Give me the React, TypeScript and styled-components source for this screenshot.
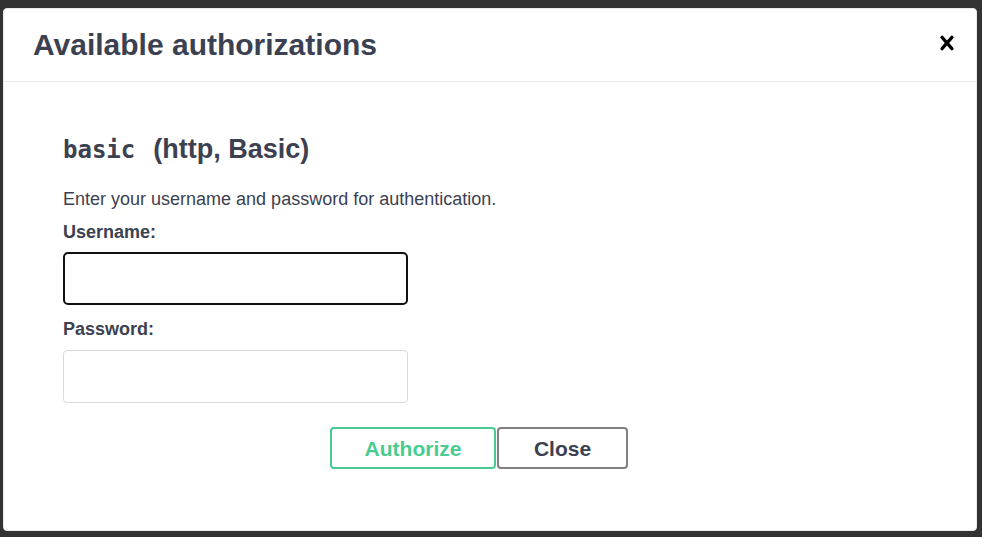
import React from "react";
import styled, { createGlobalStyle } from "styled-components";

const Global = createGlobalStyle`
  html, body { margin: 0; padding: 0; background: #333333; }
  body { font-family: "Liberation Sans", Arial, sans-serif; }
  * { box-sizing: border-box; }
`;

const Backdrop = styled.div`
  width: 982px;
  height: 537px;
  padding: 8px 5px 6px 3px;
  background: #333333;
`;

const Modal = styled.div`
  width: 974px;
  height: 523px;
  background: #ffffff;
  border: 1px solid #ebebeb;
  border-radius: 4px;
  display: flex;
  flex-direction: column;
  overflow: hidden;
`;

const Header = styled.div`
  height: 73px;
  flex: none;
  display: flex;
  align-items: center;
  padding: 0 15px 0 29px;
  border-bottom: 1px solid #ebebeb;
`;

const Title = styled.h3`
  margin: 0;
  font: 700 30px/34px "Liberation Sans", Arial, sans-serif;
  color: #3b4151;
`;

const CloseIcon = styled.button`
  margin-left: auto;
  margin-bottom: 5px;
  width: 28px;
  height: 28px;
  padding: 0;
  border: none;
  background: none;
  display: flex;
  cursor: pointer;
  svg { width: 28px; height: 28px; fill: #000; }
`;

const Content = styled.div`
  padding: 52px 59px 0 59px;
  display: flex;
  flex-direction: column;
  align-items: flex-start;
`;

const SchemeTitle = styled.h4`
  margin: 0;
  font: 700 27px/31px "Liberation Sans", Arial, sans-serif;
  color: #3b4151;
  white-space: pre;
`;

const Code = styled.code`
  font: 700 24px/31px "DejaVu Sans Mono", monospace;
  color: #3b4151;
  margin-right: 3px;
`;

const Description = styled.p`
  margin: 22px 0 0 0;
  font: 400 18px/22px "Liberation Sans", Arial, sans-serif;
  color: #3b4151;
`;

const Label = styled.label<{ $top: number }>`
  display: block;
  margin-top: ${(p) => p.$top}px;
  font: 700 18px/22px "Liberation Sans", Arial, sans-serif;
  color: #3b4151;
`;

const Input = styled.input<{ $focused?: boolean; $top: number }>`
  display: block;
  margin-top: ${(p) => p.$top}px;
  width: 345px;
  height: 53px;
  border-radius: ${(p) => (p.$focused ? "5px" : "4px")};
  border: ${(p) => (p.$focused ? "2px solid #111111" : "1px solid #d9d9d9")};
  background: #ffffff;
  outline: none;
  font: 400 18px "Liberation Sans", Arial, sans-serif;
  padding: 0 10px;
`;

const ButtonRow = styled.div`
  align-self: stretch;
  margin-top: 24px;
  display: flex;
  justify-content: center;
  gap: 1px;
`;

const ActionButton = styled.button<{ $variant: "auth" | "done"; $width: number }>`
  width: ${(p) => p.$width}px;
  height: 42px;
  border-radius: 4px;
  background: #ffffff;
  border: 2px solid ${(p) => (p.$variant === "auth" ? "#49cc90" : "#808080")};
  color: ${(p) => (p.$variant === "auth" ? "#49cc90" : "#3b4151")};
  font: 700 21px/1 "Liberation Sans", Arial, sans-serif;
  margin-right: ${(p) => (p.$variant === "done" ? "22px" : "0")};
  padding: 0;
  cursor: pointer;
`;

export default function App() {
  return (
    <>
      <Global />
      <Backdrop>
        <Modal>
          <Header>
            <Title>Available authorizations</Title>
            <CloseIcon aria-label="Close">
              <svg viewBox="0 0 20 20">
                <path d="M14.348 14.849a1.2 1.2 0 0 1-1.697 0L10 11.819l-2.651 3.029a1.2 1.2 0 1 1-1.697-1.697l2.758-3.15-2.759-3.152a1.2 1.2 0 1 1 1.697-1.697L10 8.183l2.651-3.031a1.2 1.2 0 1 1 1.697 1.697l-2.758 3.152 2.758 3.15a1.2 1.2 0 0 1 0 1.698z" />
              </svg>
            </CloseIcon>
          </Header>
          <Content>
            <SchemeTitle>
              <Code>basic</Code>{"\u00a0 (http, Basic)"}
            </SchemeTitle>
            <Description>Enter your username and password for authentication.</Description>
            <Label $top={11}>Username:</Label>
            <Input $focused $top={9} type="text" />
            <Label $top={13}>Password:</Label>
            <Input $top={10} type="password" />
            <ButtonRow>
              <ActionButton $variant="auth" $width={166}>Authorize</ActionButton>
              <ActionButton $variant="done" $width={131}>Close</ActionButton>
            </ButtonRow>
          </Content>
        </Modal>
      </Backdrop>
    </>
  );
}
